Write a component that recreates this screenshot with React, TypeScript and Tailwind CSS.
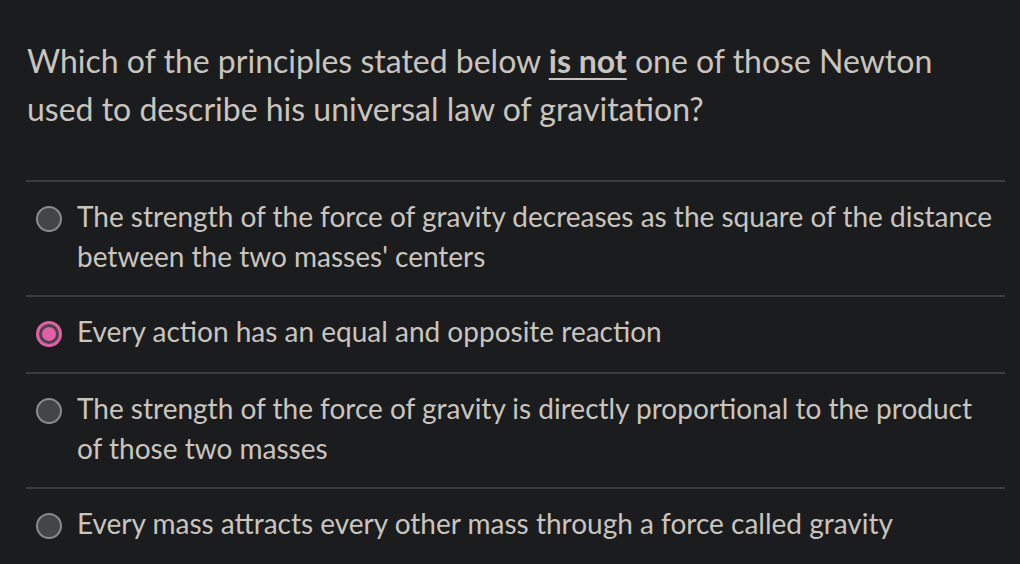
const options = [
  {
    text: "The strength of the force of gravity decreases as the square of the distance between the two masses' centers",
    selected: false,
  },
  { text: "Every action has an equal and opposite reaction", selected: true },
  {
    text: "The strength of the force of gravity is directly proportional to the product of those two masses",
    selected: false,
  },
  { text: "Every mass attracts every other mass through a force called gravity", selected: false },
];

function Radio({ selected }: { selected: boolean }) {
  if (selected) {
    return (
      <span className="mt-[10px] flex h-[26px] w-[26px] shrink-0 items-center justify-center rounded-full bg-[#e45ea7]">
        <span className="flex h-[20px] w-[20px] items-center justify-center rounded-full bg-[#444547]">
          <span className="h-[14px] w-[14px] rounded-full bg-[#e45ea7]" />
        </span>
      </span>
    );
  }
  return <span className="mt-[10px] h-[26px] w-[26px] shrink-0 rounded-full border-2 border-[#8b8b8b] bg-[#444547]" />;
}

export default function App() {
  return (
    <div className="h-[564px] w-[1020px] overflow-hidden bg-[#1b1c1e] font-['Lato','Noto_Sans',sans-serif] text-[#c9c5be]">
      <div className="pl-[27px] pr-[15px] pt-[37px]">
        <p className="text-[32px] leading-[48px]">
          Which of the principles stated below{" "}
          <span className="font-bold underline decoration-2 underline-offset-[5px]">is not</span> one of those Newton
          used to describe his universal law of gravitation?
        </p>
      </div>
      <div className="ml-[26px] mr-[15px] mt-[47px]">
        {options.map((o, i) => (
          <div
            key={i}
            className="flex min-h-[77px] gap-[15px] border-t-2 border-[#3b3c3e] pb-[19px] pl-[10px] pt-[14px] pr-[8px]"
          >
            <Radio selected={o.selected} />
            <span className="text-[28px] leading-[40px]">{o.text}</span>
          </div>
        ))}
      </div>
    </div>
  );
}
